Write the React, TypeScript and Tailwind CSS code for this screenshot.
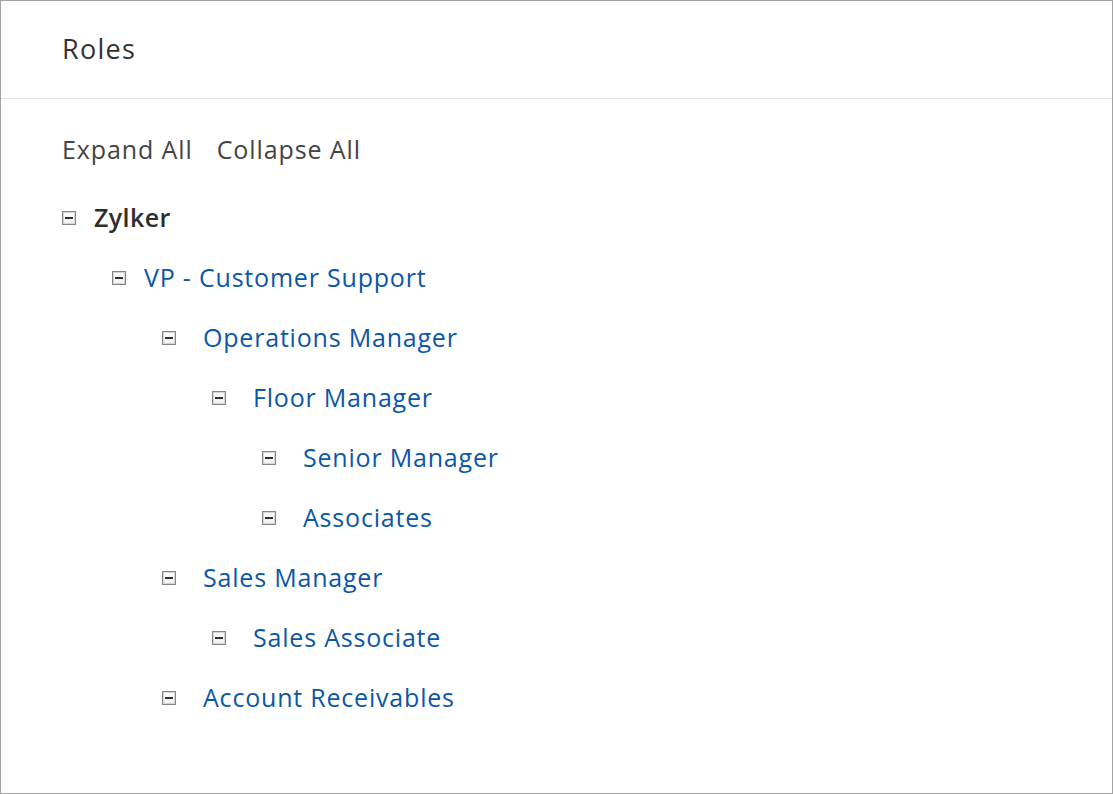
const tree = [
  { label: "Zylker", level: 0, root: true },
  { label: "VP - Customer Support", level: 1 },
  { label: "Operations Manager", level: 2 },
  { label: "Floor Manager", level: 3 },
  { label: "Senior Manager", level: 4 },
  { label: "Associates", level: 4 },
  { label: "Sales Manager", level: 2 },
  { label: "Sales Associate", level: 3 },
  { label: "Account Receivables", level: 2 },
];

const indent = ["pl-0", "pl-[50px]", "pl-[100px]", "pl-[150px]", "pl-[200px]"];

function CollapseIcon() {
  return (
    <span className="flex h-[14px] w-[14px] shrink-0 items-center justify-center border border-[#858585] bg-gradient-to-b from-white to-[#f0f0f0] shadow-[inset_0_0_0_1px_#d6d6d6]">
      <span className="h-[2px] w-[8px] bg-[#2f2f2f]" />
    </span>
  );
}

export default function App() {
  return (
    <div
      className="h-[794px] w-[1113px] border border-[#a3a3a3] bg-white text-[#333]"
      style={{ fontFamily: "'Open Sans', Lato, sans-serif" }}
    >
      {/* Header */}
      <div className="flex h-[98px] items-center border-b border-[#e2e2e2] px-[61px]">
        <h1 className="text-[27px] font-normal tracking-[1.3px]">Roles</h1>
      </div>

      <div className="px-[61px]">
        <div className="mt-[31px] flex h-[40px] items-center gap-[24px] text-[25px] tracking-[0.9px] text-[#444]">
          <span>Expand All</span>
          <span>Collapse All</span>
        </div>

        <ul className="mt-[18px]">
          {tree.map((node, i) => (
            <li
              key={i}
              className={`flex h-[60px] items-center ${indent[node.level]} ${
                node.level >= 2 ? "gap-[27px]" : "gap-[18px]"
              }`}
            >
              <CollapseIcon />
              <span
                className={
                  node.root
                    ? "text-[25px] font-semibold tracking-[0.4px] text-[#2d2d2d]"
                    : "text-[25px] tracking-[0.8px] text-[#0b57a8]"
                }
              >
                {node.label}
              </span>
            </li>
          ))}
        </ul>
      </div>
    </div>
  );
}
